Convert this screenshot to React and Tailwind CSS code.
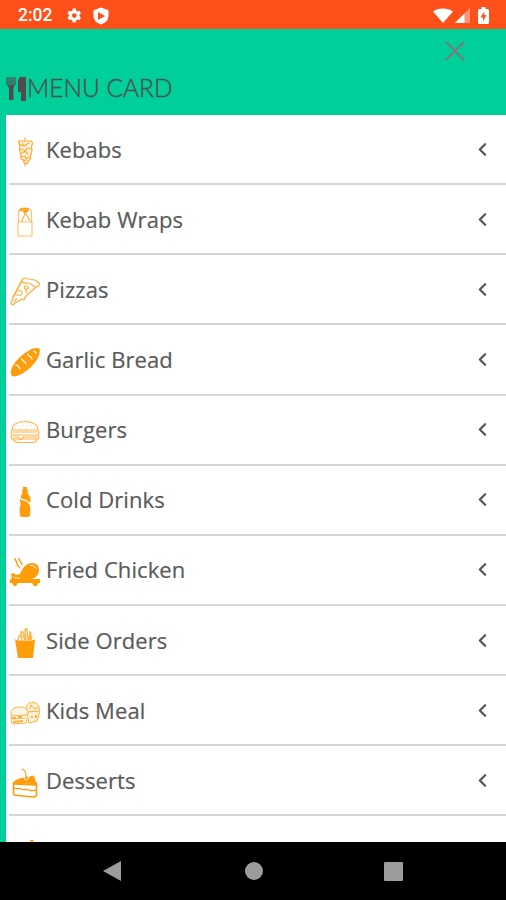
import { ChevronLeft } from 'lucide-react'

const ORANGE = '#ff9c0a'

function KebabIcon() {
  return (
    <svg viewBox="0 0 30 30" className="w-[30px] h-[30px]" fill="none" stroke={ORANGE} strokeWidth="1.200" strokeLinejoin="round" strokeLinecap="round" opacity=".85">
      <path d="M15 1v3M15 27v2" />
      <path fill="#fff3e0" d="M8.500 4h13l1 2-1 4 .5 3-1.500 6v3l-2 1.500-.5 2-2 1.500-2-1.500v-2l-3-2v-3l-1.500-6 .5-3-1-4z" />
      <path d="M9 7l5 2-2-3M14 9l5-3M10 12l4 1 1 2 2-4 4 1M12 16l3-2 3 3M11 20l4-1 1 3 3-2M13 24l3-1" />
    </svg>
  )
}

function WrapIcon() {
  return (
    <svg viewBox="0 0 30 30" className="w-[30px] h-[30px]" fill="none" stroke={ORANGE} strokeWidth="1.200" strokeLinejoin="round">
      <path d="M8.500 15V5c0-2.500 3-4 6.500-4s6.500 1.500 6.500 4v10" opacity=".6" />
      <path d="M8 15h14v14H8z" opacity=".6" />
      <path d="M9 4c3-1 5 0 6 2 0 4-3 5-3 9M15 5l5 9" opacity=".8" />
      <path strokeWidth="1.800" d="M10 3c2-1.500 6-2 9 0M13 4h4M15 5l3-1" />
    </svg>
  )
}

function PizzaIcon() {
  return (
    <svg viewBox="0 0 30 30" className="w-[30px] h-[30px]" fill="none" stroke={ORANGE} strokeWidth="1.200" strokeLinejoin="round" opacity=".8">
      <path d="M12 3c1-3 4-2 6-1 5 0 9 2 11 4 1 3-1 4-3 4L15 20l-1 3-2-1-7 4-2 2-2-1 2-7z" />
      <path d="M12 4c1 3 4 2 6 2 4 0 5 4 8 4M12 4L3 21" />
      <path d="M15 9c3-1 4 2 2 3s-4-1-2-3zM8 14c3-1 5 1 4 3s-5 2-6 0M19 11c-3 0-4 3-2 5M4 25l3-4" />
    </svg>
  )
}

function BreadIcon() {
  return (
    <svg viewBox="0 0 30 30" className="w-[30px] h-[30px]">
      <path fill={ORANGE} d="M29.500 1.500c1.500 6-3 13-9 19C14 26 6 31 2 29-1 25 2 18 9 11c6-6 15-12 20.500-9.500z" />
      <path stroke="white" strokeWidth="1.300" fill="none" strokeLinecap="round" d="M6 18l2 1 2 3M12 12l1 2 2 1 1 2M18 7l1 2 2 1 1 2M24 4l2 2" />
    </svg>
  )
}

function BurgerIcon() {
  return (
    <svg viewBox="0 0 30 30" className="w-[30px] h-[30px]" fill="none" stroke={ORANGE} strokeWidth="1.100" strokeLinejoin="round" opacity=".75">
      <path d="M2 13c0-5 5-8.500 13-8.500S28 8 28 13zM2 13l-1 3 1 2h26l1-2-1-3M2 18l-1 2 1 2h26l1-2-1-2M3 22c1 3 3 3.500 7 3.500h10c5 0 7-.5 7-3.500" />
      <path d="M3 15h24M3 20h5l2 3 4-3h13" />
      <path opacity=".5" d="M7 9h1M12 8h1M17 9h1M21 8h1M10 11h1M15 11h1" />
    </svg>
  )
}

function BottleIcon() {
  return (
    <svg viewBox="0 0 30 30" className="w-[30px] h-[30px]">
      <path fill={ORANGE} d="M13 0h4v2l1 1-.5 3 2 3c1 2 1.500 4 .5 7l-.5 2 1 4-.5 7-2 1h-6l-2-1-.5-7 1-4-.5-5c0-3 1-4 2.500-7l-.5-3 1-1z" />
      <path stroke="white" strokeWidth="1.300" fill="none" d="M9 9.500l3 3 4 1 5 4" />
    </svg>
  )
}

function ChickenIcon() {
  return (
    <svg viewBox="0 0 30 30" className="w-[30px] h-[30px]">
      <path fill={ORANGE} d="M0 22h30v4h-2l-1 3h-3l-2-3H8l-2 3H4l-2-3H0z" />
      <path fill={ORANGE} d="M8 19c2-1 2-3 4-6 2-4 6-7 10-7 5 0 7 3 7 7 0 5-4 9-9 9H9c-2 0-3-2-1-3z" />
      <path fill={ORANGE} d="M1 17l3-1 2 2 3-1 1 3-2 3H2z" />
      <path stroke={ORANGE} strokeWidth="1.400" fill="none" d="M5 1c-1 3 3 3 2 6 0 2 2 2 3 4M9 1c-1 3 3 3 3 7" />
      <path stroke="white" strokeWidth="1" fill="none" d="M20 8.500c3-.5 5 .5 6 3" />
      <path stroke="white" strokeWidth=".7" fill="none" d="M3 19l2 2h5" />
    </svg>
  )
}

function FriesIcon() {
  return (
    <svg viewBox="0 0 30 30" className="w-[30px] h-[30px]">
      <path fill={ORANGE} d="M5 11c1 1 3 1.500 5 1.500h10c2 0 4-.5 5-1.500l-2 19H8z" />
      <path stroke={ORANGE} strokeWidth="1.400" fill="none" opacity=".75" d="M8 12l1-4 2-1 1 5M12 12l-1-8 2 0 2 8M16 12l-1-11 2 0 1 11M19 12l1-8 1 1-1 7M13 9l3-3M21 12l1-4" />
    </svg>
  )
}

function KidsMealIcon() {
  return (
    <svg viewBox="0 0 30 30" className="w-[30px] h-[30px]" fill="none" stroke={ORANGE} strokeWidth="1" strokeLinejoin="round" opacity=".8">
      <path fill="#ffedd0" d="M16 11c0-8 11-9 13-2 1 5 0 10-2 14l-8 2z" />
      <path fill="#fff3e0" d="M1 15c0-4 4-6 9-6s7 2 8 6l-1 2-15 1z" />
      <path d="M1 18v3l15-1M1 22l1 4 14-1 1-4M18 14l11-1" />
      <path strokeWidth="2" d="M2 20h4M8 19h4M3 24l10-1M22 18v2M26 17v3" />
      <path d="M20 7l5 4 3-2M19 11l3-4" />
    </svg>
  )
}

function CakeIcon() {
  return (
    <svg viewBox="0 0 30 30" className="w-[30px] h-[30px]" fill="none" stroke={ORANGE} strokeLinejoin="round" strokeLinecap="round">
      <path strokeWidth="1.600" d="M3.500 15v10c0 2 2 2.500 4 2.500l16 1.500c2 0 3-1 3-3V15" />
      <path strokeWidth="1.300" d="M4 20c3 2 4-1 7 1s5-1 8 1 5 0 7 0M4 16l22 1" />
      <path fill={ORANGE} strokeWidth="1" d="M3.500 15c1-3 6-4 10-5 1 3 4 3 6-1l4-1 2.500 8z" />
      <circle cx="16.500" cy="10" r="2" fill={ORANGE} stroke="white" strokeWidth=".6" />
      <path strokeWidth="1.100" d="M12 1c3 1 4 3 4 7" />
    </svg>
  )
}

function CocktailIcon() {
  return (
    <svg viewBox="0 0 30 30" className="w-[30px] h-[30px]" fill={ORANGE}>
      <path d="M20.500 2h3l-2.500 7h-2z" />
      <path d="M5 9h20l-8 10v8h4v2H9v-2h4v-8z" />
    </svg>
  )
}

const MENU = [
  { label: 'Kebabs', icon: KebabIcon },
  { label: 'Kebab Wraps', icon: WrapIcon },
  { label: 'Pizzas', icon: PizzaIcon },
  { label: 'Garlic Bread', icon: BreadIcon },
  { label: 'Burgers', icon: BurgerIcon },
  { label: 'Cold Drinks', icon: BottleIcon },
  { label: 'Fried Chicken', icon: ChickenIcon },
  { label: 'Side Orders', icon: FriesIcon },
  { label: 'Kids Meal', icon: KidsMealIcon },
  { label: 'Desserts', icon: CakeIcon },
  { label: 'Alcohol Drinks', icon: CocktailIcon },
]

function MenuRow({ icon: Icon, label }) {
  return (
    <div className="h-[70.15px] shrink-0 ml-[3px] flex items-center border-b-2 border-[#d6d6d6] pl-px pr-[13px]">
      <div className="mt-[5px]"><Icon /></div>
      <span className="ml-[6px] grow text-[22px] tracking-[0.08px] text-[#5a5a5a] [-webkit-text-stroke:0.2px_#5a5a5a]">{label}</span>
      <ChevronLeft className="w-[21px] h-[21px] text-[#555]" strokeWidth={2.600} />
    </div>
  )
}

export default function App() {
  return (
    <div className="w-[506px] h-[900px] flex flex-col overflow-hidden bg-[#00cf9a] font-['Open_Sans',sans-serif]">
      {/* Status bar */}
      <div className="h-[29px] shrink-0 bg-[#ff5019] flex items-center pl-[18px] pr-[15px] text-white pt-[2px]">
        <span className="font-['Roboto',sans-serif] font-medium text-[17.500px] w-[46px]">2:02</span>
        <svg viewBox="0 0 24 24" className="w-[19px] h-[19px]" fill="white">
          <path d="M19.400 13a7.500 7.500 0 0 0 0-2l2.100-1.600-2-3.500-2.500 1a8 8 0 0 0-1.700-1L14.900 3.300h-4l-.4 2.600a8 8 0 0 0-1.700 1l-2.400-1-2 3.500L6.500 11a7.500 7.500 0 0 0 0 2l-2.100 1.600 2 3.500 2.400-1a8 8 0 0 0 1.700 1l.4 2.600h4l.4-2.600a8 8 0 0 0 1.700-1l2.400 1 2-3.500zM13 15a3 3 0 1 1 0-6 3 3 0 0 1 0 6z" />
        </svg>
        <svg viewBox="0 0 18 18" className="ml-[9px] w-[18px] h-[18px]">
          <path fill="white" d="M9 .5l7.500 2.800v5.200c0 4.500-3 7.500-7.500 9-4.500-1.500-7.500-4.500-7.500-9V3.300z" />
          <path fill="#ff5019" d="M6 5l7 4-7 4z" />
        </svg>
        <svg viewBox="0 0 20 18" className="ml-auto w-[20px] h-[18px]" fill="white">
          <path d="M0 4.500C5 .5 15 .5 20 4.500L10 16z" />
        </svg>
        <svg viewBox="0 0 15 15" className="ml-[2px] w-[15px] h-[15px]" fill="white">
          <path opacity=".4" d="M15 0v15H0z" /><path d="M9.500 5.500V15H0z" />
        </svg>
        <svg viewBox="0 0 11 17" className="ml-[8px] mr-[2px] w-[11px] h-[17px]">
          <path fill="white" d="M3.500 0h4v2H10l1 1v13l-1 1H1l-1-1V3l1-1h2.500z" />
          <path fill="#ff5019" d="M6.500 4L2.500 10.500h2.500v4L8.500 8H6z" />
        </svg>
      </div>

      {/* Header */}
      <div className="h-[86px] shrink-0 flex flex-col text-[#4b5352]">
        <svg viewBox="0 0 20 20" className="mt-[12px] ml-[445px] w-[20px] h-[20px]" stroke="#7f7a7d" strokeWidth="2">
          <path d="M1 1l18 18M19 1L1 19" />
        </svg>
        <div className="ml-[6px] mt-[11px] flex items-center">
          <svg viewBox="0 0 21 24" className="mt-px w-[21px] h-[24px]" fill="#514b50">
            <path opacity=".6" d="M0 0h10v8H0z" />
            <path d="M1 8h8L7.500 11v12H3V11zM14 0h6v24h-5v-9h-3V3z" />
          </svg>
          <span className="font-['Lato',sans-serif] font-light text-[24.500px] leading-[32px] [-webkit-text-stroke:0.45px_#4b5352]">MENU CARD</span>
        </div>
      </div>

      {/* Categories */}
      <div className="ml-[6px] h-[727px] shrink-0 overflow-hidden flex flex-col bg-white">
        {MENU.map((item) => <MenuRow key={item.label} {...item} />)}
      </div>

      {/* Android navigation */}
      <div className="grow bg-black flex items-center justify-between pl-[103px] pr-[103px]">
        <svg viewBox="0 0 18 20" className="w-[18px] h-[20px]" fill="#9c9c9c"><path d="M0 10L18 0v20z" /></svg>
        <div className="w-[18px] h-[18px] ml-[2px] rounded-full bg-[#9c9c9c]" />
        <div className="w-[19px] h-[19px] rounded-[1px] bg-[#9c9c9c]" />
      </div>
    </div>
  )
}
